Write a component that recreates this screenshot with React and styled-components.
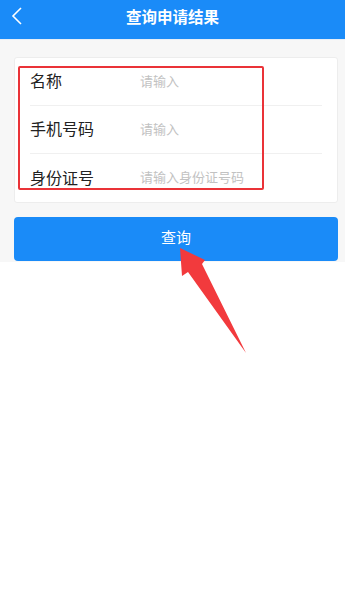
import React from "react";
import styled, { createGlobalStyle } from "styled-components";

const GlobalStyle = createGlobalStyle`
  html, body {
    margin: 0;
    padding: 0;
    background: #ffffff;
    font-family: "Noto Sans CJK SC", "Noto Sans", sans-serif;
  }
  * { box-sizing: border-box; }
`;

const Page = styled.div`
  width: 345px;
  height: 600px;
  background: #ffffff;
  position: relative;
  overflow: hidden;
`;

const Header = styled.div`
  height: 40px;
  background: #1a8bf8;
  border-bottom: 1px solid #e6eef7;
  display: flex;
  align-items: center;
  justify-content: center;
  position: relative;
`;

const Back = styled.div`
  position: absolute;
  left: 10px;
  top: 6px;
  width: 14px;
  height: 22px;
`;

const Title = styled.h1`
  margin: 0 0 7px;
  font-size: 15.5px;
  font-weight: 700;
  color: #ffffff;
`;

const Body = styled.div`
  background: #f7f7f7;
  padding: 17px 7px 1px 14px;
`;

const Card = styled.div`
  background: #ffffff;
  border: 1px solid #ededed;
  border-radius: 3px;
  padding: 0 15px 0 15px;
  position: relative;
`;

const Row = styled.div`
  height: 48px;
  display: flex;
  align-items: center;
  padding-bottom: 3px;
  border-bottom: ${({ last }) => (last ? "none" : "1px solid #f0f0f0")};
`;

const Label = styled.span`
  width: 110px;
  font-size: 16px;
  color: #222222;
`;

const Placeholder = styled.span`
  font-size: 13px;
  color: #c2c2c2;
`;

const Highlight = styled.div`
  position: absolute;
  left: 3px;
  top: 8px;
  width: 246px;
  height: 124px;
  border: 2px solid #ea3338;
  border-radius: 2px;
  pointer-events: none;
`;

const Button = styled.button`
  display: flex;
  align-items: center;
  justify-content: center;
  width: 324px;
  height: 44px;
  margin-top: 14px;
  border: none;
  border-radius: 4px;
  background: #1a8bf8;
  color: #ffffff;
  font-family: inherit;
  font-size: 15px;
  padding: 0 0 5px;
`;

const Arrow = styled.svg`
  position: absolute;
  left: 0;
  top: 0;
  pointer-events: none;
`;

const fields = [
  { label: "名称", hint: "请输入" },
  { label: "手机号码", hint: "请输入" },
  { label: "身份证号", hint: "请输入身份证号码" },
];

const App = () => {
  return (
    <Page>
      <GlobalStyle />
      <Header>
        <Back>
          <svg width="14" height="22" viewBox="0 0 14 22">
            <path d="M11 2 L3 10 L11 18" fill="none" stroke="#fff" strokeWidth="1.6" />
          </svg>
        </Back>
        <Title>查询申请结果</Title>
      </Header>
      <Body>
        <Card>
          {fields.map((f, i) => (
            <Row key={f.label} last={i === fields.length - 1}>
              <Label>{f.label}</Label>
              <Placeholder>{f.hint}</Placeholder>
            </Row>
          ))}
          <Highlight />
        </Card>
        <Button>查询</Button>
      </Body>
      <Arrow width="345" height="600" viewBox="0 0 345 600">
        <polygon
          points="180,248 205,260 202,264 246,353 188,272 182,276"
          fill="#f23a3d"
        />
      </Arrow>
    </Page>
  );
};

export default App;
